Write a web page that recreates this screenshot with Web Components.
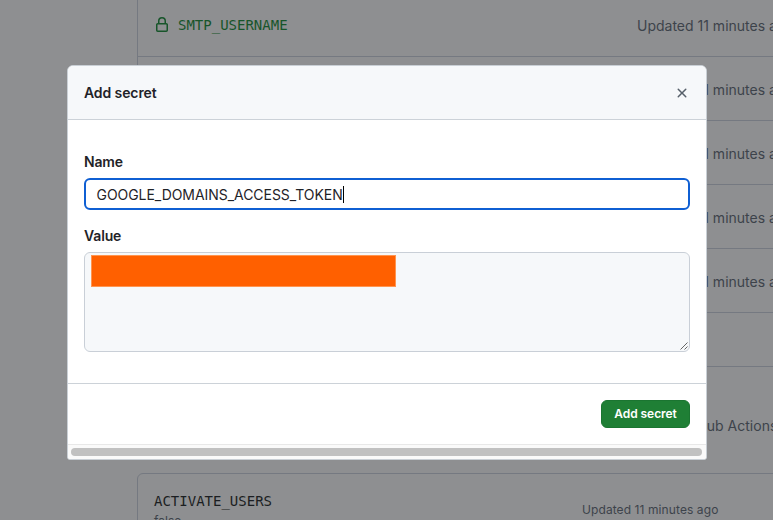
<!DOCTYPE html>
<html lang="en"><head><meta charset="utf-8"><title>Add secret</title>
<style>
html,body{margin:0;width:773px;height:520px;overflow:hidden;background:#8e8f91;font-family:Inter,"Liberation Sans",sans-serif;color:#1f2328}
</style></head><body><secrets-page></secrets-page>
<script>
const define=(name,html)=>customElements.define(name,class extends HTMLElement{
  constructor(){super();this.attachShadow({mode:'open'}).innerHTML=html;}
});
define('secret-row',`<style>
:host{display:flex;box-sizing:border-box;height:64px;border-bottom:1px solid #757981;padding:0 0 0 16px;align-items:center;font-size:14px;color:#3d434b;white-space:nowrap}
.name{flex:none;width:483px;display:flex;align-items:center;gap:8px;font:14px "DejaVu Sans Mono",monospace;color:#17552a}
.time{padding-top:2px}
svg{display:block;width:16px;height:16px}
</style><div class="name"><svg viewBox="0 0 16 16" fill="currentColor"><path d="M4 4a4 4 0 0 1 8 0v2h.25c.966 0 1.75.784 1.75 1.75v5.5A1.75 1.75 0 0 1 12.25 15h-8.5A1.75 1.75 0 0 1 2 13.25v-5.5C2 6.784 2.784 6 3.75 6H4Zm8.25 3.5h-8.5a.25.25 0 0 0-.25.25v5.5c0 .138.112.25.25.25h8.5a.25.25 0 0 0 .25-.25v-5.5a.25.25 0 0 0-.25-.25ZM10.5 6V4a2.5 2.5 0 1 0-5 0v2Z"/></svg><slot name="name"></slot></div><div class="time"><slot></slot></div>`);
define('variable-card',`<style>
:host{display:flex;box-sizing:border-box;height:80px;border:1px solid #757981;border-radius:6px;padding:18px 16px;white-space:nowrap}
.key{width:428px;font:14px/18px "DejaVu Sans Mono",monospace;color:#1b1e22}
.value{font:12px/18px Inter,sans-serif;color:#3d434b;margin-top:2px}
.time{font-size:12px;letter-spacing:.09px;line-height:18px;color:#3d434b;margin-top:9px}
</style><div class="key"><slot name="key"></slot><div class="value"><slot name="value"></slot></div></div><div class="time"><slot></slot></div>`);
define('form-field',`<style>
:host{display:block}
.label{font-size:14px;line-height:20px;font-weight:600;letter-spacing:-.15px;margin-bottom:6px}
</style><div class="label"><slot name="label"></slot></div><slot></slot>`);
define('text-input',`<style>
:host{display:flex;align-items:center;box-sizing:border-box;height:32px;border:2px solid #0f5fd3;border-radius:6px;background:#fff;padding:0 10.5px;font-size:14px;letter-spacing:-.05px}
i{width:1px;height:17px;background:#000}
</style><slot></slot><i></i>`);
define('text-area',`<style>
:host{display:flex;box-sizing:border-box;height:100px;border:1px solid #c9cfd7;border-radius:6px;background:#f6f8fa;padding:2px 0 0 6px;justify-content:space-between}
.mask{width:305px;height:32px;box-sizing:border-box;background:#ff6000;border:1px solid #ff9550}
svg{width:8px;height:8px;align-self:flex-end;margin:0 1px 1px 0}
</style><div class="mask"></div><svg viewBox="0 0 8 8" stroke="#555" stroke-width=".9"><path d="M.5 7.5 7.5.5M4.5 7.5l3-3"/></svg>`);
define('primary-button',`<style>
:host{display:flex;align-items:center;justify-content:center;box-sizing:border-box;width:89px;height:28px;border:1px solid #1b7531;border-radius:6px;background:#1f7f35;color:#fff;font-size:12px;font-weight:600;letter-spacing:-.05px;padding-bottom:1px}
</style><slot></slot>`);
define('scroll-bar',`<style>
:host{display:block;box-sizing:border-box;height:15px;border-top:1px solid #e8e8e8;background:#fafafa;padding:3px 4px 3px 3px}
div{height:8px;border-radius:4px;background:#c1c1c1}
</style><div></div>`);
define('modal-dialog',`<style>
:host{display:flex;flex-direction:column;box-sizing:border-box;width:640px;height:395px;border:1px solid #c9cfd5;border-radius:6px 6px 3px 3px;background:#fff;overflow:hidden}
header{display:flex;box-sizing:border-box;height:54px;flex:none;border-bottom:1px solid #ccd2d8;background:#f6f8fa;padding:0 16px;align-items:center;justify-content:space-between;font-size:14px;font-weight:600;letter-spacing:-.1px}
header svg{width:16px;height:16px;color:#57606a}
main{height:263px;flex:none;box-sizing:border-box;padding:32px 16px 0;display:flex;flex-direction:column;gap:16px}
footer{flex:1;box-sizing:border-box;border-top:1px solid #ccd2d8;padding:16px;display:flex;justify-content:flex-end}
</style><header><slot name="title"></slot><svg viewBox="0 0 16 16" fill="currentColor"><path d="M3.72 3.72a.75.75 0 0 1 1.06 0L8 6.94l3.22-3.22a.75.75 0 1 1 1.06 1.06L9.06 8l3.22 3.22a.75.75 0 1 1-1.06 1.06L8 9.06l-3.22 3.22a.75.75 0 0 1-1.06-1.06L6.94 8 3.72 4.78a.75.75 0 0 1 0-1.06Z"/></svg></header><main><slot></slot></main><footer><slot name="action"></slot></footer><scroll-bar></scroll-bar>`);
define('secrets-page',`<style>
:host{display:block;position:relative;width:773px;height:520px;overflow:hidden}
.back{padding-left:137px;width:720px}
.list{border-left:1px solid #757981;margin-top:-7px}
.gap{height:53px;border-bottom:1px solid #757981}
.note{height:106px;display:flex;align-items:center;font-size:14px;color:#3d434b;padding-top:11px;box-sizing:border-box;padding-left:541px;white-space:nowrap}
modal-dialog{position:absolute;left:67px;top:65px}
</style><div class="back"><div class="list">
<secret-row><span slot="name">SMTP_USERNAME</span>Updated 11 minutes ago</secret-row>
${'<secret-row>Updated 11 minutes ago</secret-row>'.repeat(4)}
<div class="gap"></div></div>
<div class="note">GitHub Actions</div>
<variable-card><span slot="key">ACTIVATE_USERS</span><span slot="value">false</span>Updated 11 minutes ago</variable-card></div>
<modal-dialog><span slot="title">Add secret</span>
<form-field><span slot="label">Name</span><text-input>GOOGLE_DOMAINS_ACCESS_TOKEN</text-input></form-field>
<form-field><span slot="label">Value</span><text-area></text-area></form-field>
<primary-button slot="action">Add secret</primary-button></modal-dialog>`);
</script></body></html>
